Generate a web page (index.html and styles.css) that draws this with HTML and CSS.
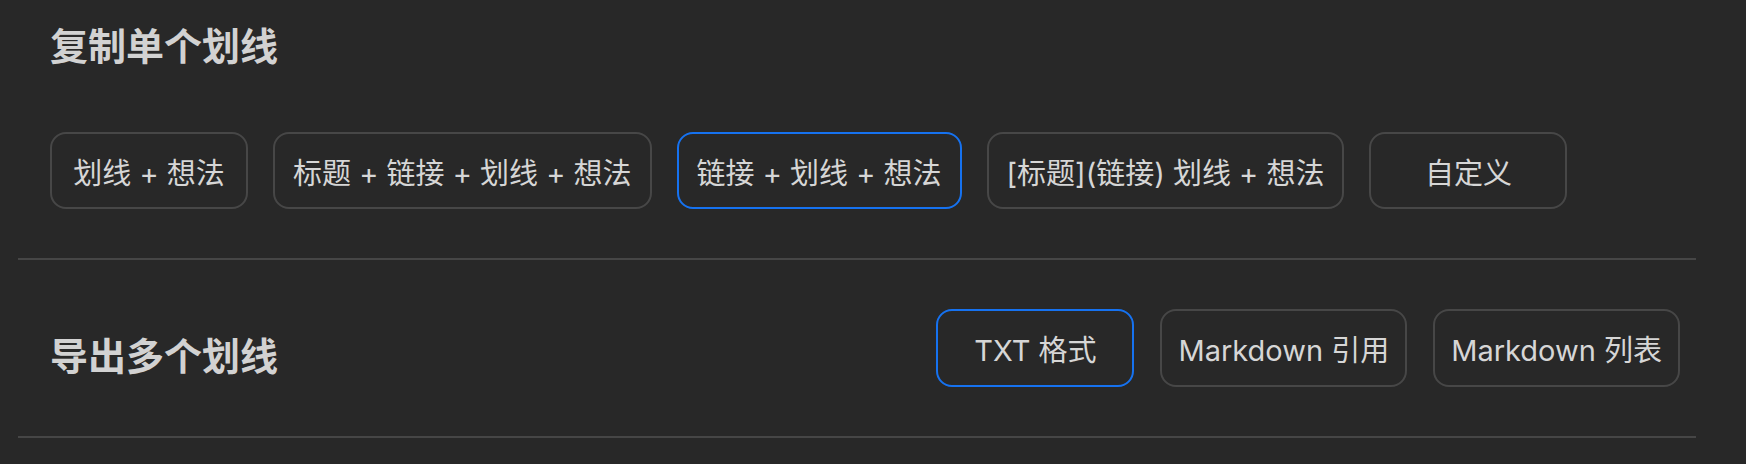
FILE: index.html
```html
<!DOCTYPE html>
<html lang="zh-CN">
<head>
    <meta charset="UTF-8">
    <meta name="viewport" content="width=device-width, initial-scale=1.0">
    <title>划线设置</title>
    <link rel="stylesheet" href="styles.css">
</head>
<body>
    <div class="panel">
        <!-- Copy one highlight -->
        <section class="setting single">
            <h2 class="setting-title">复制单个划线</h2>
            <div class="options">
                <button class="option">划线 + 想法</button>
                <button class="option">标题 + 链接 + 划线 + 想法</button>
                <button class="option active">链接 + 划线 + 想法</button>
                <button class="option">[标题](链接) 划线 + 想法</button>
                <button class="option">自定义</button>
            </div>
        </section>

        <!-- Export many highlights -->
        <section class="setting multi">
            <h2 class="setting-title">导出多个划线</h2>
            <div class="options">
                <button class="option active">TXT 格式</button>
                <button class="option">Markdown 引用</button>
                <button class="option">Markdown 列表</button>
            </div>
        </section>
    </div>
</body>
</html>
```

FILE: styles.css
```css
body {
    margin: 0;
    padding: 0;
    background: #282828;
    font-family: Inter, "Noto Sans CJK SC", sans-serif;
    color: #d6d6d6;
}

.panel {
    margin-left: 18px;
    width: 1678px;
}

.setting {
    border-bottom: 2px solid #464646;
    padding: 0 16px 0 32px;
}

.setting-title {
    margin: 0;
    font-size: 38px;
    line-height: 52px;
    font-weight: bold;
    color: #d2d2d2;
}

.single {
    padding-top: 20px;
    padding-bottom: 49px;
}

.single .options {
    margin-top: 60px;
}

.multi {
    display: flex;
    justify-content: space-between;
    align-items: center;
    padding-top: 49px;
    padding-bottom: 49px;
}

.multi .setting-title {
    padding-top: 16px;
}

.options {
    display: flex;
    gap: 25px;
}

.option {
    box-sizing: border-box;
    height: 77px;
    min-width: 198px;
    padding: 0 18px;
    font-family: inherit;
    font-size: 29px;
    color: #d6d6d6;
    background: transparent;
    border: 2px solid #474747;
    border-radius: 16px;
    cursor: pointer;
}

.multi .options {
    gap: 26px;
}

.multi .option {
    height: 78px;
    padding: 0 16px;
}

/* Selected choice */
.option.active {
    border-color: #1672f0;
}
```
